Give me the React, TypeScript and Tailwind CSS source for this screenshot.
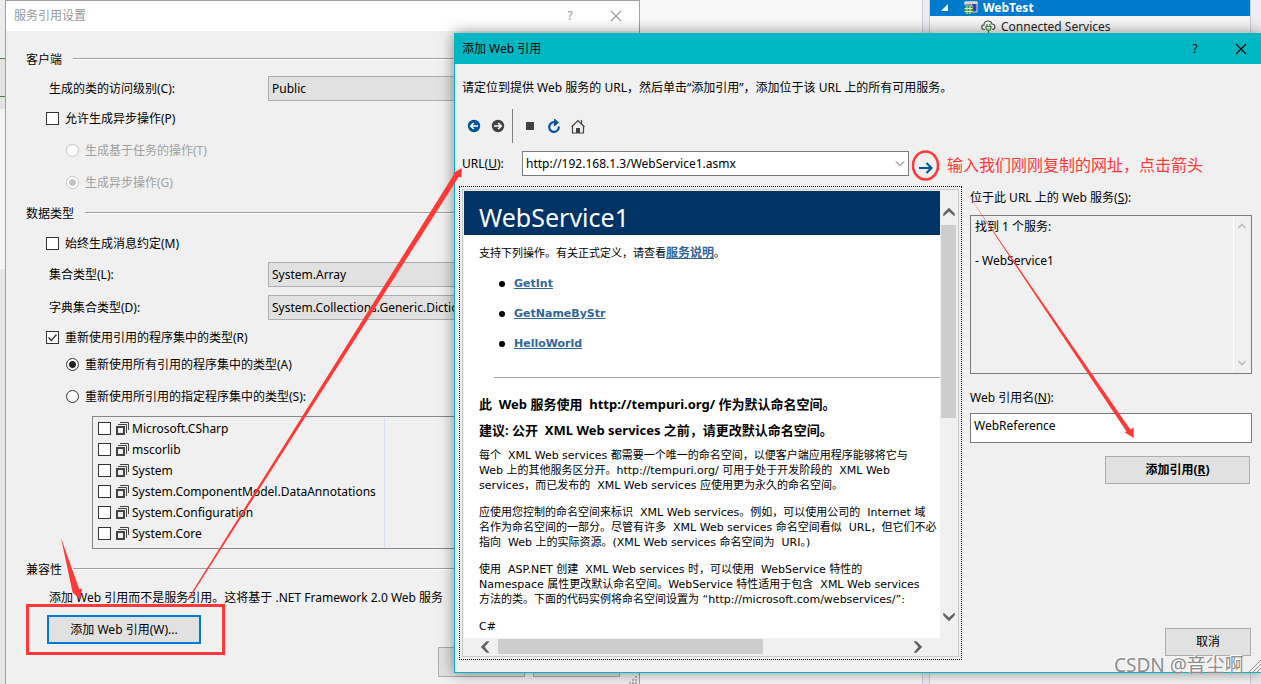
import type { ReactNode } from 'react';

const assemblies = [
  'Microsoft.CSharp',
  'mscorlib',
  'System',
  'System.ComponentModel.DataAnnotations',
  'System.Configuration',
  'System.Core',
];

const operations = ['GetInt', 'GetNameByStr', 'HelloWorld'];

const paragraphs = [
  [
    '每个  XML Web services 都需要一个唯一的命名空间，以便客户端应用程序能够将它与',
    'Web 上的其他服务区分开。http://tempuri.org/ 可用于处于开发阶段的  XML Web',
    'services，而已发布的  XML Web services 应使用更为永久的命名空间。',
  ],
  [
    '应使用您控制的命名空间来标识  XML Web services。例如，可以使用公司的  Internet 域',
    '名作为命名空间的一部分。尽管有许多  XML Web services 命名空间看似  URL，但它们不必',
    '指向  Web 上的实际资源。(XML Web services 命名空间为  URI。)',
  ],
  [
    '使用  ASP.NET 创建  XML Web services 时，可以使用  WebService 特性的',
    'Namespace 属性更改默认命名空间。WebService 特性适用于包含  XML Web services',
    '方法的类。下面的代码实例将命名空间设置为 “http://microsoft.com/webservices/”:',
  ],
  ['C#'],
];

type IconProps = { className?: string };

function CloseIcon({ className = '' }: IconProps) {
  return (
    <svg width="12" height="12" viewBox="0 0 12 12" className={className}>
      <path d="M1 1l10 10M11 1L1 11" stroke="currentColor" strokeWidth="1.1" fill="none" />
    </svg>
  );
}

// up-pointing scrollbar chevron, rotated for the other directions
function Chevron({ className = '' }: IconProps) {
  return (
    <svg width="12" height="10" viewBox="0 0 12 10" className={className}>
      <path d="M0.3 6.500L6 .8l5.700 5.700v3L6 4.600 .3 9.500z" fill="currentColor" />
    </svg>
  );
}

function AssemblyIcon() {
  return (
    <svg width="13" height="13" viewBox="0 0 13 13" className="shrink-0">
      <rect x="1" y="5" width="7" height="7" fill="#f0f0f0" stroke="#424242" strokeWidth="2" />
      <path d="M2 2.500h8.500V11M4 .5h8.500V8" stroke="#424242" fill="none" />
    </svg>
  );
}

function CheckBox({ id, label, checked = false }: { id: string; label: string; checked?: boolean }) {
  return (
    <label htmlFor={id} className="flex items-center gap-1.5">
      <span className="relative flex">
        <input
          id={id}
          type="checkbox"
          defaultChecked={checked}
          className="peer appearance-none size-[13px] bg-white border border-[#333]"
        />
        <svg
          viewBox="0 0 13 13"
          className="absolute inset-0 size-[13px] pointer-events-none invisible peer-checked:visible"
        >
          <path d="M2.500 6.500l2.800 3 5.200-6" stroke="#333" strokeWidth="1.300" fill="none" />
        </svg>
      </span>
      <span className="pt-0.5">{label}</span>
    </label>
  );
}

interface RadioProps {
  id: string;
  name: string;
  label: string;
  checked?: boolean;
  disabled?: boolean;
}

function Radio({ id, name, label, checked = false, disabled = false }: RadioProps) {
  return (
    <label htmlFor={id} className={`flex items-center gap-1.5 ${disabled ? 'text-[#a0a0a0]' : ''}`}>
      <input
        id={id}
        name={name}
        type="radio"
        defaultChecked={checked}
        disabled={disabled}
        className="appearance-none size-[13px] rounded-full bg-white border border-[#333] checked:bg-[radial-gradient(circle,#222_0_3px,#fff_4px)] disabled:border-[#c3c3c3] disabled:checked:bg-[radial-gradient(circle,#c3c3c3_0_3px,#fff_4px)]"
      />
      <span className="pt-0.5">{label}</span>
    </label>
  );
}

function SelectRow({ id, label, value }: { id: string; label: string; value: string }) {
  return (
    <>
      <label htmlFor={id} className="w-[219px] shrink-0 pt-0.5">
        {label}
      </label>
      <select
        id={id}
        className="appearance-none flex-1 h-[25px] pt-0.5 pl-[3px] bg-[#e1e1e1] border border-[#adadad]"
      >
        <option>{value}</option>
      </select>
    </>
  );
}

function SectionTitle({ children, className = '' }: { children: ReactNode; className?: string }) {
  return (
    <div className={`flex items-center gap-[11px] pl-5 ${className}`}>
      <h2 className="pt-0.5">{children}</h2>
      <div className="flex-1 h-[2px] bg-white border-t border-[#a0a0a0]" />
    </div>
  );
}

function EditorBackdrop() {
  return (
    <div className="absolute inset-0 flex">
      <div className="w-[5px] bg-[#f5f5f5]">
        <div className="h-[58px] bg-[#ececec]" />
        <div className="h-[39px] bg-[#e2e4e2] border-y border-[#388a3c]" />
        <div className="h-3 bg-[#e2e2e2]" />
        <div className="h-40" />
        <div className="h-screen bg-[#e6e6e6]" />
      </div>
      <div className="flex-1 bg-[#f8f8f8]" />
      <div className="w-2 bg-[#eeeef2] border-x border-[#cccedb]" />
      <div className="w-[320px] bg-[#f6f6f6] text-[#1e1e1e]">
        <div className="flex items-center h-4 pl-[11px] bg-[#007acc] text-white font-bold">
          <svg width="8" height="8" viewBox="0 0 8 8">
            <path d="M7 0v7H0z" fill="#fff" />
          </svg>
          <svg width="16" height="14" viewBox="0 0 16 14" className="ml-3.5 mr-1">
            <path d="M2 1h12v10H9V4H2z" fill="#2f45b5" stroke="#ddd6d0" />
            <path d="M1.500 .5h13v2.500h-13z" fill="#ddd6d0" />
            <circle cx="5.500" cy="9" r="4.500" fill="#3f9142" />
            <path d="M1.500 7.500h8M1.500 10.500h8M4 5v8M7 5v8" stroke="#d5f0c0" />
          </svg>
          WebTest
        </div>
        <div className="flex items-center gap-[5px] h-[22px] pl-[51px]">
          <svg width="15" height="14" viewBox="0 0 15 14" fill="none">
            <path d="M4 9.500H3a2.300 2.300 0 010-4.600C3 2 5 1 7 1s3.500 1.200 4 3c3.500 0 4 5 .5 5.500H11" stroke="#555" strokeWidth="1.200" />
            <path d="M6 4v2M9 4v2M5 6.500h5v1.500l-1 2H6l-1-2zM7.500 10v4" stroke="#388a34" strokeWidth="1.200" />
          </svg>
          Connected Services
        </div>
      </div>
      <div className="w-[11px] bg-[#eeeef2] border-l border-[#cccedb]" />
    </div>
  );
}

function SettingsDialog() {
  return (
    <section className="absolute left-[5px] top-0 bottom-0 w-[635px] bg-[#f0f0f0] border border-b-0 border-[#a0a0a0] whitespace-nowrap overflow-hidden">
      <header className="flex items-center h-[30px] pl-2 pr-[17px] bg-white text-[#999]">
        <h1 className="flex-1">服务引用设置</h1>
        <button className="w-4 mr-8" aria-label="帮助">?</button>
        <button aria-label="关闭">
          <CloseIcon />
        </button>
      </header>

      <SectionTitle className="h-7 mt-3.5">客户端</SectionTitle>
      <div className="flex items-center h-[30px] pl-[43px] pr-5">
        <SelectRow id="access" label="生成的类的访问级别(C):" value="Public" />
      </div>
      <div className="flex items-center h-[30px] pl-10">
        <CheckBox id="async" label="允许生成异步操作(P)" />
      </div>
      <div className="flex items-center h-[34px] pl-15">
        <Radio id="task" name="async-kind" label="生成基于任务的操作(T)" disabled />
      </div>
      <div className="flex items-center h-[30px] pl-15">
        <Radio id="generate" name="async-kind" label="生成异步操作(G)" checked disabled />
      </div>

      <SectionTitle className="h-8">数据类型</SectionTitle>
      <div className="flex items-center h-7 pl-10">
        <CheckBox id="message" label="始终生成消息约定(M)" />
      </div>
      <div className="flex items-center h-[34px] pl-[43px] pr-5">
        <SelectRow id="collection" label="集合类型(L):" value="System.Array" />
      </div>
      <div className="flex items-center h-8 pl-[43px] pr-5">
        <SelectRow id="dictionary" label="字典集合类型(D):" value="System.Collections.Generic.Dictionary" />
      </div>
      <div className="flex items-center h-7 pl-10">
        <CheckBox id="reuse" label="重新使用引用的程序集中的类型(R)" checked />
      </div>
      <div className="flex items-center h-[26px] pl-15">
        <Radio id="reuse-all" name="reuse-kind" label="重新使用所有引用的程序集中的类型(A)" checked />
      </div>
      <div className="flex items-center h-[38px] pl-15">
        <Radio id="reuse-some" name="reuse-kind" label="重新使用所引用的指定程序集中的类型(S):" />
      </div>
      <div className="mt-px ml-[86px] mr-5 h-[133px] p-px border border-[#828790]">
        <ul className="w-[291px] h-full border-r border-[#d5dff0]">
          {assemblies.map((name) => (
            <li key={name}>
              <label className="flex items-center h-[21px] pl-1">
                <input type="checkbox" className="appearance-none size-[13px] mr-[5px] bg-white border border-[#333]" />
                <AssemblyIcon />
                <span className="ml-[3px]">{name}</span>
              </label>
            </li>
          ))}
        </ul>
      </div>

      <SectionTitle className="h-10">兼容性</SectionTitle>
      <p className="pl-[43px] pt-px leading-4">添加 Web 引用而不是服务引用。这将基于 .NET Framework 2.0 Web 服务</p>
      <button className="block ml-[41px] mt-[9px] w-[154px] h-[29px] bg-[#e1e1e1] border-2 border-[#0078d7]">
        添加 Web 引用(W)...
      </button>
      <footer className="flex justify-end gap-2 mt-[3px] pr-[19px]">
        <button className="w-[87px] h-[30px] bg-[#e1e1e1] border border-[#adadad]" aria-label="确定" />
        <button className="w-[87px] h-[30px] bg-[#e1e1e1] border border-[#adadad]" aria-label="取消" />
      </footer>
      <svg width="8" height="8" viewBox="0 0 8 8" fill="#b0b0b0" className="absolute right-0.5 bottom-0">
        <path d="M6 0h2v2H6zM3 3h2v2H3zM6 3h2v2H6zM0 6h2v2H0zM3 6h2v2H3zM6 6h2v2H6z" />
      </svg>
    </section>
  );
}

function ServicePage() {
  return (
    <article className="h-[447px] bg-white overflow-hidden whitespace-pre text-[11px] font-['DejaVu_Sans','Noto_Sans_CJK_SC',sans-serif]">
      <h1 className="h-11 pt-1 pl-[15px] bg-[#003366] text-white text-[25px] leading-[44px] font-['Noto_Sans','Noto_Sans_CJK_SC',sans-serif]">
        WebService1
      </h1>
      <p className="mt-2.5 pl-[15px] leading-4">
        支持下列操作。有关正式定义，请查看
        <a href="#description" className="font-bold text-[12px] text-[#336699] underline">服务说明</a>。
      </p>
      <ul className="mt-[7px] pl-[35px]">
        {operations.map((name) => (
          <li key={name} className="flex items-center gap-[9px] h-[30px]">
            <span className="size-1.5 rounded-full bg-black" />
            <a href={`#${name}`} className="font-bold text-[#336699] underline">
              {name}
            </a>
          </li>
        ))}
      </ul>
      <hr className="mt-[18px] ml-[30px] h-[2px] border-[#a0a0a0]" />
      <div className="mt-3 pl-[15px] text-[13px] leading-[26px] font-bold font-['Noto_Sans','Noto_Sans_CJK_SC',sans-serif]">
        <h3>{'此  Web 服务使用  http://tempuri.org/ 作为默认命名空间。'}</h3>
        <h3>{'建议: 公开  XML Web services 之前，请更改默认命名空间。'}</h3>
      </div>
      <div className="flex flex-col gap-3 mt-[5px] pl-[15px] leading-[15px]">
        {paragraphs.map((lines) => (
          <p key={lines[0]}>{lines.join('\n')}</p>
        ))}
      </div>
    </article>
  );
}

function BrowserFrame() {
  return (
    <div className="flex-1 min-w-0 p-[2px] border border-dotted border-black">
      <div className="grid grid-cols-[1fr_17px] border border-[#c8c8c8] p-px">
        <ServicePage />
        <div className="flex flex-col items-center pt-4 pb-4 bg-[#f0f0f0] text-[#606060]">
          <Chevron />
          <div className="mt-2 w-[15px] h-[193px] bg-[#cdcdcd]" />
          <Chevron className="rotate-180 mt-auto" />
        </div>
        <div className="flex items-center h-[17px] pl-[15px] pr-4 bg-[#f0f0f0] text-[#606060]">
          <Chevron className="-rotate-90" />
          <div className="ml-[7px] w-[265px] h-[15px] bg-[#cdcdcd]" />
          <Chevron className="rotate-90 ml-auto" />
        </div>
        <div className="bg-[#f0f0f0]" />
      </div>
    </div>
  );
}

function Toolbar() {
  return (
    <div className="flex items-center h-[34px] pl-3">
      <button aria-label="后退" className="w-6">
        <svg width="14" height="14" viewBox="0 0 14 14">
          <circle cx="7" cy="7" r="6.200" fill="#00539c" />
          <path d="M11 7H4M6.800 4L3.800 7l3 3" stroke="#fff" strokeWidth="1.700" fill="none" />
        </svg>
      </button>
      <button aria-label="前进" className="w-6">
        <svg width="14" height="14" viewBox="0 0 14 14">
          <circle cx="7" cy="7" r="6.200" fill="#424242" />
          <path d="M3 7h7M7.200 4l3 3-3 3" stroke="#fff" strokeWidth="1.700" fill="none" />
        </svg>
      </button>
      <div className="w-px h-full -ml-[3px] mr-3 bg-[#808080]" />
      <button aria-label="停止" className="w-6">
        <svg width="8" height="8" viewBox="0 0 8 8" className="ml-[1px]">
          <path d="M0 0h8v8H0z" fill="#424242" />
        </svg>
      </button>
      <button aria-label="刷新" className="w-6">
        <svg width="14" height="14" viewBox="0 0 14 14" className="-ml-[2px]">
          <path d="M8 3.200H7A4.800 4.800 0 1011.800 7.500" stroke="#00539c" strokeWidth="2.200" fill="none" />
          <path d="M7 0h1l4 3.500L8 7H7z" fill="#00539c" />
        </svg>
      </button>
      <button aria-label="主页">
        <svg width="14" height="15" viewBox="0 0 14 15" className="-ml-[2px]" fill="none" stroke="#424242" strokeWidth="1.200">
          <path d="M.5 8L7 1.500 13.500 8M1.500 7.500v6.500h11V7.500M10.500 5V1" />
          <path d="M5 9h4v5H5z" fill="#424242" stroke="none" />
        </svg>
      </button>
    </div>
  );
}

function AddReferenceDialog() {
  return (
    <section className="absolute left-[454px] right-0 top-[33px] h-[640px] bg-[#f0f0f0] border border-r-0 border-[#00b7c3] shadow-[0_0_14px_rgba(0,0,0,0.45)] whitespace-nowrap">
      <header className="flex items-center h-[30px] pl-[7px] pr-3.5 bg-[#00b7c3]">
        <h1 className="flex-1">添加 Web 引用</h1>
        <button className="w-4 mr-8" aria-label="帮助">?</button>
        <button aria-label="关闭">
          <CloseIcon />
        </button>
      </header>
      <p className="h-[45px] pt-4 pl-[7px] leading-4">
        请定位到提供 Web 服务的 URL，然后单击“添加引用”，添加位于该 URL 上的所有可用服务。
      </p>
      <Toolbar />
      <div className="flex items-center mt-2 pl-[7px]">
        <label htmlFor="url" className="w-[60px]">
          URL(<u>U</u>):
        </label>
        <div className="flex flex-1 h-[25px] bg-white border border-[#7a7a7a]">
          <input id="url" defaultValue="http://192.168.1.3/WebService1.asmx" className="flex-1 min-w-0 pl-[3px]" />
          <button aria-label="展开" className="pr-[3px]">
            <svg width="10" height="6" viewBox="0 0 10 6" fill="none" stroke="#555">
              <path d="M1 .5l4 4 4-4" />
            </svg>
          </button>
        </div>
        <div className="w-[352px] pl-2.5 pt-2">
          <button aria-label="转到" className="block">
            <svg width="14" height="12" viewBox="0 0 14 12" fill="none" stroke="#00539c" strokeWidth="2">
              <path d="M0 6h12.500M7.500 1l5 5-5 5" />
            </svg>
          </button>
        </div>
      </div>

      <div className="flex gap-2 mt-[10px] pl-1 pr-[9px]">
        <BrowserFrame />
        <div className="flex flex-col w-[282px]">
          <h2 className="mt-1 leading-4">
            位于此 URL 上的 Web 服务(<u>S</u>):
          </h2>
          <div className="flex h-[159px] mt-[9px] p-px border border-[#7a7a7a] leading-[17px]">
            <div className="flex-1 pt-px pl-[3px]">
              <p>找到 1 个服务:</p>
              <p className="mt-[17px]">- WebService1</p>
            </div>
            <div className="flex flex-col justify-between items-center w-[17px] py-1 border-l border-white text-[#bfbfbf]">
              <Chevron className="w-2" />
              <Chevron className="w-2 rotate-180" />
            </div>
          </div>
          <label htmlFor="reference-name" className="mt-4 leading-4">
            Web 引用名(<u>N</u>):
          </label>
          <input
            id="reference-name"
            defaultValue="WebReference"
            className="h-[30px] mt-[7px] pl-[3px] pb-1.5 bg-white border border-[#7a7a7a]"
          />
          <button className="self-end mr-[2px] mt-[13px] w-[145px] h-7 bg-[#e1e1e1] border border-[#adadad] font-bold">
            添加引用(<u>R</u>)
          </button>
          <button className="self-end mt-auto mb-1 mr-px w-[86px] h-7 bg-[#e1e1e1] border border-[#adadad]">
            取消
          </button>
        </div>
      </div>
    </section>
  );
}

function Annotations() {
  return (
    <>
      <div className="absolute left-[26px] top-[604px] w-[199px] h-[51px] border-3 border-[#ff3838]" />
      <svg width="1261" height="684" className="absolute left-0 top-0 pointer-events-none" fill="#ff3838">
        <path d="M61 538l11.500 54 .2.500 7.300 7 2-11-2.800.5z" />
        <path d="M187 600L454.500 173.500l-2.200.3 9.400-5.700-.4 10-2.300-1.500L188.500 600z" />
        <path d="M965 190L1126.500 431.500l-2.200.5 9.500 6-.2-10.500-3.300 2z" />
        <ellipse cx="925.500" cy="165.500" rx="12.500" ry="14" fill="none" stroke="#ff3838" strokeWidth="2.500" />
      </svg>
      <p className="absolute left-[947px] top-[153px] text-[16px] leading-6 text-[#ff3838] whitespace-nowrap">
        输入我们刚刚复制的网址，点击箭头
      </p>
      <p className="absolute left-[1114px] top-[653px] text-[19px] leading-6 text-[#8c8c8c] whitespace-nowrap [text-shadow:-1px_-1px_0_#fff]">
        CSDN @音尘啊
      </p>
      <svg width="12" height="14" viewBox="0 0 12 14" className="absolute right-0 top-[659px]" stroke="#8c8c8c">
        <path d="M0 13L12 1M4 13l8-8M8 13l4-4" />
      </svg>
    </>
  );
}

export default function App() {
  return (
    <main className="relative h-screen overflow-hidden text-[12px] text-black font-['Noto_Sans','Noto_Sans_CJK_SC',sans-serif]">
      <EditorBackdrop />
      <SettingsDialog />
      <AddReferenceDialog />
      <Annotations />
    </main>
  );
}
